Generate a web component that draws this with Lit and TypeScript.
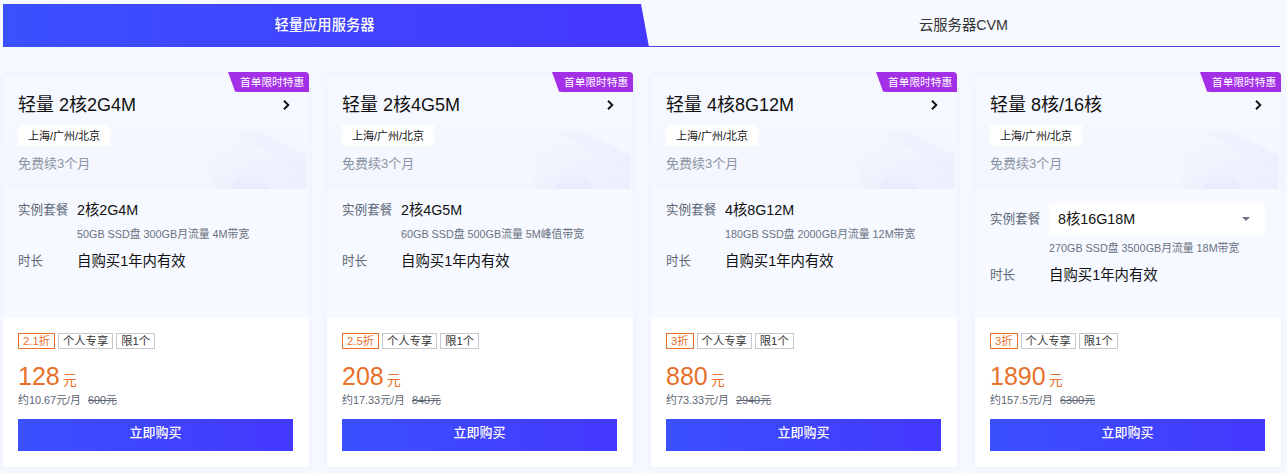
import { LitElement, html, css } from "lit";
import { customElement } from "lit/decorators.js";

const FONT = css`"Liberation Sans", Arial, "Noto Sans CJK SC", sans-serif`;

interface Plan {
  title: string; spec: string; desc: string; time: string; tag: string;
  price: string; month: string; orig: string; select?: boolean;
}

const plans: Plan[] = [
  { title: "轻量 2核2G4M", spec: "2核2G4M", desc: "50GB SSD盘 300GB月流量 4M带宽", time: "自购买1年内有效", tag: "2.1折", price: "128", month: "约10.67元/月", orig: "600元" },
  { title: "轻量 2核4G5M", spec: "2核4G5M", desc: "60GB SSD盘 500GB流量 5M峰值带宽", time: "自购买1年内有效", tag: "2.5折", price: "208", month: "约17.33元/月", orig: "840元" },
  { title: "轻量 4核8G12M", spec: "4核8G12M", desc: "180GB SSD盘 2000GB月流量 12M带宽", time: "自购买1年内有效", tag: "3折", price: "880", month: "约73.33元/月", orig: "2940元" },
  { title: "轻量 8核/16核", spec: "8核16G18M", desc: "270GB SSD盘 3500GB月流量 18M带宽", time: "自购买1年内有效", tag: "3折", price: "1890", month: "约157.5元/月", orig: "6300元", select: true },
];

@customElement("app-root")
export class AppRoot extends LitElement {
  static styles = css`
    :host { display: block; width: 1287px; height: 473px; overflow: hidden; background: #f6f9ff; font-family: ${FONT}; color: #000; }
    .tabs { display: flex; margin: 4px 7px 0 3px; height: 43px; box-sizing: border-box; border-bottom: 1px solid #4a46d8; }
    .tab { flex: 1; display: flex; align-items: center; justify-content: center; font-size: 14.3px; color: #333; padding: 0 2px 4px 0; box-sizing: border-box; }
    .tab.on { flex: 0 0 646px; color: #fff; font-weight: 500; background: linear-gradient(90deg, #3b50ff, #4538ff); clip-path: polygon(0 0, 638px 0, 646px 100%, 0 100%); height: 43px; padding-right: 3px; }
    .cards { display: flex; gap: 18px; margin: 28px 6px 0 3px; }
    .card { position: relative; width: 306px; height: 392px; display: flex; flex-direction: column; background: #fff; box-shadow: 0 0 6px rgba(215,225,248,.45); }
    .ribbon { position: absolute; top: -3px; right: 0; width: 81px; height: 20px; box-sizing: border-box; padding: 0 0 1px 12px; display: flex; align-items: center; font-size: 10.7px; color: #fff; background: #a330e6; border-radius: 0 4px 0 0; clip-path: polygon(0 0, 100% 0, 100% 100%, 10px 100%, 7px 97%); white-space: nowrap; }
    .head { position: relative; height: 114px; box-sizing: border-box; padding: 17px 15px 0; background: linear-gradient(180deg, #f6f9ff, #f3f6fe); overflow: hidden; }
    .art { position: absolute; right: 2px; bottom: 0; width: 98px; height: 62px; display: block; }
    .title-row { position: relative; display: flex; justify-content: space-between; align-items: center; height: 26px; }
    .title { font-size: 18px; line-height: 26px; color: #111; }
    .chev { width: 10px; height: 12px; margin-right: 3px; display: block; }
    .region { position: relative; display: inline-block; margin-top: 7px; height: 21px; line-height: 22px; width: 92px; text-align: center; background: #fff; font-size: 11px; color: #111; }
    .free { position: relative; margin-top: 9px; font-size: 13px; line-height: 18px; color: #8d94a5; }
    .mid { height: 129px; box-sizing: border-box; padding: 12px 15px 0; background: #f6f9ff; }
    .mid.sel { padding-top: 14px; }
    .row { display: flex; font-size: 14.3px; line-height: 18px; }
    .lab { width: 59px; flex: none; color: #5d6675; font-size: 12.6px; }
    .val { color: #111; }
    .desc { margin: 7px 0 0 59px; font-size: 10.8px; line-height: 16px; color: #6a7283; white-space: nowrap; }
    .time { margin-top: 10px; }
    .time .val { font-size: 14.4px; }
    .mid.sel .time { margin-top: 10px; }
    .mid.sel .desc { margin-top: 5px; }
    .mid.sel .first .lab { padding-top: 7px; }
    .select { width: 216px; height: 32px; box-sizing: border-box; background: #fff; display: flex; align-items: center; justify-content: space-between; padding: 0 15px 0 9px; color: #111; }
    .caret { width: 0; height: 0; border: 4px solid transparent; border-top-color: #6a7283; border-bottom-width: 0; }
    .foot { flex: 1; padding: 15px 15px 0; background: #fff; }
    .tags { display: flex; gap: 3px; }
    .tag { height: 16px; box-sizing: border-box; padding: 0 4px; line-height: 14px; font-size: 11.3px; color: #333; border: 1px solid #c6c9d0; white-space: nowrap; }
    .tag.hot { color: #e8702a; border-color: #e8702a; }
    .price { margin-top: 14px; height: 27px; display: flex; align-items: baseline; color: #e8702a; font-size: 25px; line-height: 27px; }
    .price span { font-size: 14px; margin-left: 3px; }
    .sub { margin-top: 2px; font-size: 10.9px; line-height: 16px; color: #5d6675; white-space: nowrap; }
    .sub s { margin-left: 7px; }
    .buy { margin-top: 11px; width: 275px; height: 32px; border: 0; padding: 0 0 8px; display: block; color: #fff; font: 500 13px ${FONT}; background: linear-gradient(90deg, #3b50ff, #4538ff); }
  `;

  private art() {
    return html`<svg class="art" viewBox="0 0 98 62">
      <defs>
        <linearGradient id="panel" x1="0" y1="0" x2="1" y2="1"><stop offset="0" stop-color="#f4f6ff"/><stop offset="1" stop-color="#ebeefd"/></linearGradient>
        <linearGradient id="band" x1="0" y1="0" x2="1" y2="0.6"><stop offset="0" stop-color="#f2f5ff"/><stop offset="1" stop-color="#ecEffd"/></linearGradient>
        <linearGradient id="bump" x1="0" y1="0" x2="0" y2="1"><stop offset="0" stop-color="#f1f4ff"/><stop offset="1" stop-color="#e7ebfc"/></linearGradient>
      </defs>
      <path d="M1 17 L30 13 L97 46 V62 H1Z" fill="url(#panel)"/>
      <path d="M20 4 L48 3 L97 28 V48 Z" fill="url(#band)"/>
      <path d="M22 62 C26 48 34 40 44 36 L62 62Z" fill="url(#bump)"/>
    </svg>`;
  }

  private card(p: Plan) {
    return html`<div class="card">
      <div class="head">
        ${this.art()}
        <div class="title-row"><div class="title">${p.title}</div>
          <svg class="chev" viewBox="0 0 10 12"><path d="M3 1.8 L7.3 6 L3 10.2" fill="none" stroke="#111" stroke-width="1.9"/></svg>
        </div>
        <div class="region">上海/广州/北京</div>
        <div class="free">免费续3个月</div>
      </div>
      <div class="mid ${p.select ? "sel" : ""}">
        <div class="row first"><div class="lab">实例套餐</div>
          ${p.select
            ? html`<div class="select">${p.spec}<i class="caret"></i></div>`
            : html`<div class="val">${p.spec}</div>`}
        </div>
        <div class="desc">${p.desc}</div>
        <div class="row time"><div class="lab">时长</div><div class="val">${p.time}</div></div>
      </div>
      <div class="foot">
        <div class="tags"><div class="tag hot">${p.tag}</div><div class="tag">个人专享</div><div class="tag">限1个</div></div>
        <div class="price">${p.price}<span>元</span></div>
        <div class="sub">${p.month}<s>${p.orig}</s></div>
        <button class="buy">立即购买</button>
      </div>
      <div class="ribbon">首单限时特惠</div>
    </div>`;
  }

  render() {
    return html`
      <div class="tabs">
        <div class="tab on">轻量应用服务器</div>
        <div class="tab off">云服务器CVM</div>
      </div>
      <div class="cards">${plans.map((p) => this.card(p))}</div>
    `;
  }
}
